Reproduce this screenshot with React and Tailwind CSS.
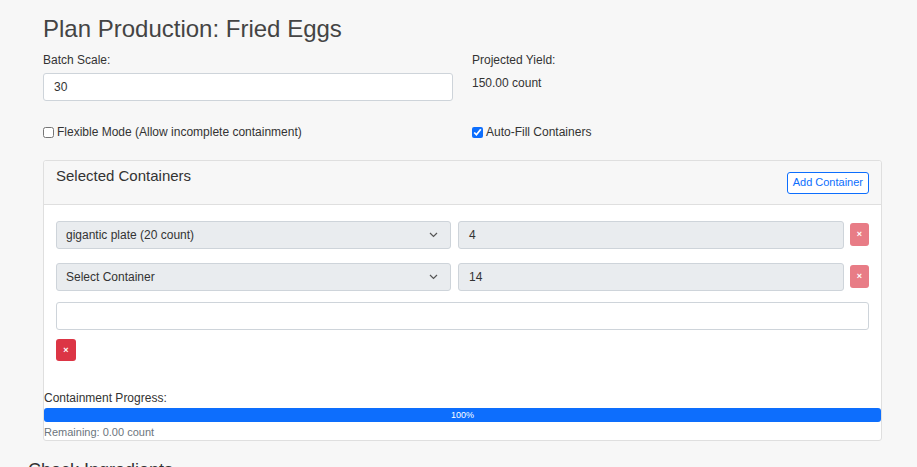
import { useState } from "react";

const Chevron = () => (
    <svg width="9" height="6" viewBox="0 0 9 6" fill="none">
        <path d="M1 1l3.5 3.5L8 1" stroke="#555" strokeWidth="1.2" />
    </svg>
);

const DeleteButton = ({ faded }) => (
    <button
        className={`flex items-center justify-center rounded-[3px] text-white text-[9px] font-bold leading-none ${faded ? 'bg-[#e87c86] w-[19px] h-[23px] mt-[2px]' : 'bg-[#dc3545] w-[20px] h-[22px]'}`}
    >
        ×
    </button>
);

const App = () => {
    const [flexible, setFlexible] = useState(false);
    const [autoFill, setAutoFill] = useState(true);

    const rows = [
        { container: 'gigantic plate (20 count)', qty: '4' },
        { container: 'Select Container', qty: '14' },
    ];

    return (
        <div className="min-h-screen bg-[#f7f7f7] font-['Liberation_Sans',Arial,sans-serif] text-[#333] overflow-hidden">
            <div className="ml-[43px] w-[839px]">
                <h1 className="pt-[14px] text-[24px] leading-[29px] text-[#444]">Plan Production: Fried Eggs</h1>

                <div className="grid grid-cols-2 gap-x-[19px] mt-[8px]">
                    <div>
                        <p className="text-[12px] leading-[18px]">Batch Scale:</p>
                        <input
                            defaultValue="30"
                            className="mt-[4px] w-full h-[28px] bg-white border border-[#ced4da] rounded-[3px] px-[10px] text-[12px] text-[#333] outline-none"
                        />
                    </div>
                    <div>
                        <p className="text-[12px] leading-[18px]">Projected Yield:</p>
                        <p className="mt-[5px] text-[12px] leading-[18px]">150.00 count</p>
                    </div>
                </div>

                <div className="grid grid-cols-2 gap-x-[19px] mt-[22px]">
                    <label className="flex items-center gap-[3px] text-[12px] leading-[18px]">
                        <input
                            type="checkbox"
                            checked={flexible}
                            onChange={() => setFlexible(!flexible)}
                            className="w-[11px] h-[11px] m-0 accent-[#0d6efd]"
                        />
                        Flexible Mode (Allow incomplete containment)
                    </label>
                    <label className="flex items-center gap-[3px] text-[12px] leading-[18px]">
                        <input
                            type="checkbox"
                            checked={autoFill}
                            onChange={() => setAutoFill(!autoFill)}
                            className="w-[11px] h-[11px] m-0 accent-[#0d6efd]"
                        />
                        Auto-Fill Containers
                    </label>
                </div>

                <div className="mt-[19px] bg-white border border-[#dfdfdf] rounded-[3px]">
                    <div className="h-[44px] bg-[#f7f7f7] border-b border-[#dfdfdf] px-[12px] flex justify-between items-center rounded-t-[3px]">
                        <h2 className="self-start mt-[6px] text-[15px] leading-[18px] text-[#333]">Selected Containers</h2>
                        <button className="h-[22px] px-[5px] border border-[#0d6efd] rounded-[3px] text-[11px] text-[#0d6efd] bg-white">
                            Add Container
                        </button>
                    </div>

                    <div className="px-[12px] pt-[16px] pb-[30px]">
                        <div className="flex flex-col gap-[14px]">
                            {rows.map((row, i) => (
                                <div key={i} className="flex items-start">
                                    <div className="w-[395px] h-[28px] bg-[#e9ecef] border border-[#ced4da] rounded-[3px] pl-[9px] pr-[12px] flex items-center justify-between text-[12px]">
                                        <span>{row.container}</span>
                                        <Chevron />
                                    </div>
                                    <div className="ml-[7px] w-[386px] h-[28px] bg-[#e9ecef] border border-[#ced4da] rounded-[3px] px-[10px] flex items-center text-[12px]">
                                        {row.qty}
                                    </div>
                                    <div className="ml-[6px]">
                                        <DeleteButton faded />
                                    </div>
                                </div>
                            ))}
                        </div>
                        <div className="mt-[11px] h-[28px] bg-white border border-[#ced4da] rounded-[3px]" />
                        <div className="mt-[9px]">
                            <DeleteButton />
                        </div>
                    </div>

                    <div className="pb-[1px]">
                        <p className="text-[12px] leading-[14px] text-[#333]">Containment Progress:</p>
                        <div className="mt-[3px] h-[14px] bg-[#0d6efd] rounded-[3px] flex items-center justify-center text-white text-[9px] leading-none">
                            100%
                        </div>
                        <p className="mt-[3px] text-[11px] leading-[14px] text-[#6c757d]">Remaining: 0.00 count</p>
                    </div>
                </div>

                <h2 className="-ml-[15px] mt-[18px] text-[18px] leading-[22px] text-[#333]">Check Ingredients</h2>
            </div>
        </div>
    );
};

export default App;
